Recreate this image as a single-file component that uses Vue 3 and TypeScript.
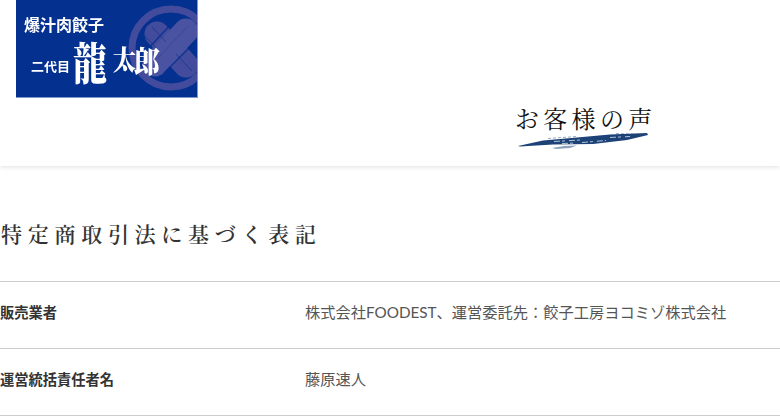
<template>
  <div class="page">
    <header class="site-header">
      <a class="logo" href="#" aria-label="爆汁肉餃子 二代目 龍太郎">
        <svg width="182" height="98" viewBox="0 0 182 98">
          <defs>
            <clipPath id="logoClip"><rect width="181" height="97" /></clipPath>
          </defs>
          <rect width="182" height="98" fill="#7f97cf" />
          <rect width="181" height="97" fill="#04308f" />
          <g clip-path="url(#logoClip)" class="crest">
            <circle cx="155" cy="48" r="39" fill="none" stroke="#434c9c" stroke-width="7" />
            <!-- 違い鷹の羽 -->
            <path d="M141 34 L170 65" stroke="#434c9c" stroke-width="25" stroke-linecap="round" />
            <path d="M139 64 L170 31" stroke="#4a53a2" stroke-width="25" stroke-linecap="round" />
            <path d="M130 51 L157 22 M148 73 L183 38" stroke="#04308f" stroke-width="1.4" fill="none" opacity="0.85" />
            <path d="M136 27 L150 42 M129 36 L141 49 M160 54 L176 71" stroke="#04308f" stroke-width="1" fill="none" opacity="0.6" />
            <path d="M142 58 L172 26" stroke="#04308f" stroke-width="0.8" fill="none" opacity="0.4" />
          </g>
          <g class="logo-type">
            <text x="8" y="31" class="logo-top">爆汁肉餃子</text>
            <text x="15" y="71" class="logo-sub">二代目</text>
            <text transform="translate(57 80) scale(1 1.3)" class="logo-dragon">龍</text>
            <text transform="translate(97 70) scale(1 1.2)" class="logo-name">太</text>
            <text transform="translate(118 72) scale(1.12 1.3)" class="logo-name">郎</text>
          </g>
        </svg>
      </a>
      <nav class="nav">
        <a class="nav-item" href="#">
          <span class="nav-label">お客様の声</span>
          <svg class="brush" width="131" height="17" viewBox="0 0 131 17">
            <path d="M0 13 L25 7.5 L59 4.5 L92 1.5 L129 0 L130 2 L109 7 L75 11 L35 11.5 L2 13.5 Z" fill="#1c4277" />
            <path d="M34 15 L46 13 L59 12.5 L52 15 L38 16 Z" fill="#1c4277" opacity="0.5" />
            <path d="M30 5.5 L58 3.5 M98 0.5 L122 -0.5" stroke="#1c4277" stroke-width="1" stroke-dasharray="3 2" opacity="0.45" />
            <path d="M36 8.5 L62 7 M64 9.5 L88 7.5 M92 4.5 L112 3.5 M44 10.5 L58 10" stroke="#fff" stroke-width="0.8" stroke-dasharray="6 2 3 4" opacity="0.85" />
          </svg>
        </a>
      </nav>
    </header>

    <main class="content">
      <h1 class="title">特定商取引法に基づく表記</h1>
      <dl class="law-table">
        <div v-for="row in rows" :key="row.label" class="law-row">
          <dt>{{ row.label }}</dt>
          <dd>{{ row.value }}</dd>
        </div>
      </dl>
    </main>
  </div>
</template>

<script setup lang="ts">
const rows: { label: string; value: string }[] = [
  { label: '販売業者', value: '株式会社FOODEST、運営委託先：餃子工房ヨコミゾ株式会社' },
  { label: '運営統括責任者名', value: '藤原速人' },
]
</script>

<style>
html, body { overflow: hidden; background: #fff; }
</style>

<style scoped>
.page {
  width: 780px;
  height: 417px;
  overflow: hidden;
  font-family: "Lato", "Noto Sans CJK JP", sans-serif;
  color: #333;
}

.site-header {
  height: 166px;
  padding-left: 16px;
  box-sizing: border-box;
  display: flex;
  align-items: flex-start;
  box-shadow: 0 1px 5px rgba(0, 0, 0, 0.12);
}

.logo { display: block; height: 98px; }
.logo svg { display: block; }
.crest { filter: blur(0.4px); }
.logo-type { filter: blur(0.35px); }
.logo text { fill: #fff; font-family: "Noto Sans CJK JP", sans-serif; font-weight: 700; }
.logo-top { font-size: 16px; }
.logo-sub { font-size: 13px; }
.logo text.logo-dragon { font-family: "Noto Serif CJK JP", serif; font-size: 34px; font-weight: 900; }
.logo text.logo-name { font-family: "Noto Serif CJK JP", serif; font-size: 23px; font-weight: 900; }

.nav { margin-left: 318px; padding-top: 102px; }
.nav-item { display: block; text-decoration: none; color: #111; }
.nav-label {
  display: block;
  margin-left: -1px;
  font-family: "Noto Serif CJK JP", "Noto Sans CJK JP", serif;
  font-size: 24px;
  line-height: 31px;
  letter-spacing: 4.3px;
  white-space: nowrap;
}
.brush { display: block; margin-left: 2px; filter: blur(0.3px); }

.content { padding-top: 52px; }

.title {
  margin: 0 0 33px;
  padding-left: 1px;
  font-family: "Noto Serif CJK JP", "Noto Sans CJK JP", serif;
  font-size: 21px;
  font-weight: 600;
  line-height: 30px;
  letter-spacing: 5.72px;
  color: #333;
}

.law-table { margin: 0; border-top: 1px solid #ccc; }
.law-row {
  display: flex;
  align-items: center;
  height: 67px;
  box-sizing: border-box;
  padding-bottom: 8px;
  border-bottom: 1px solid #ccc;
}
.law-row dt {
  width: 305px;
  font-size: 14.25px;
  font-weight: 700;
  color: #333;
}
.law-row dd {
  margin: 0;
  font-size: 15.26px;
  color: #555;
}
</style>
